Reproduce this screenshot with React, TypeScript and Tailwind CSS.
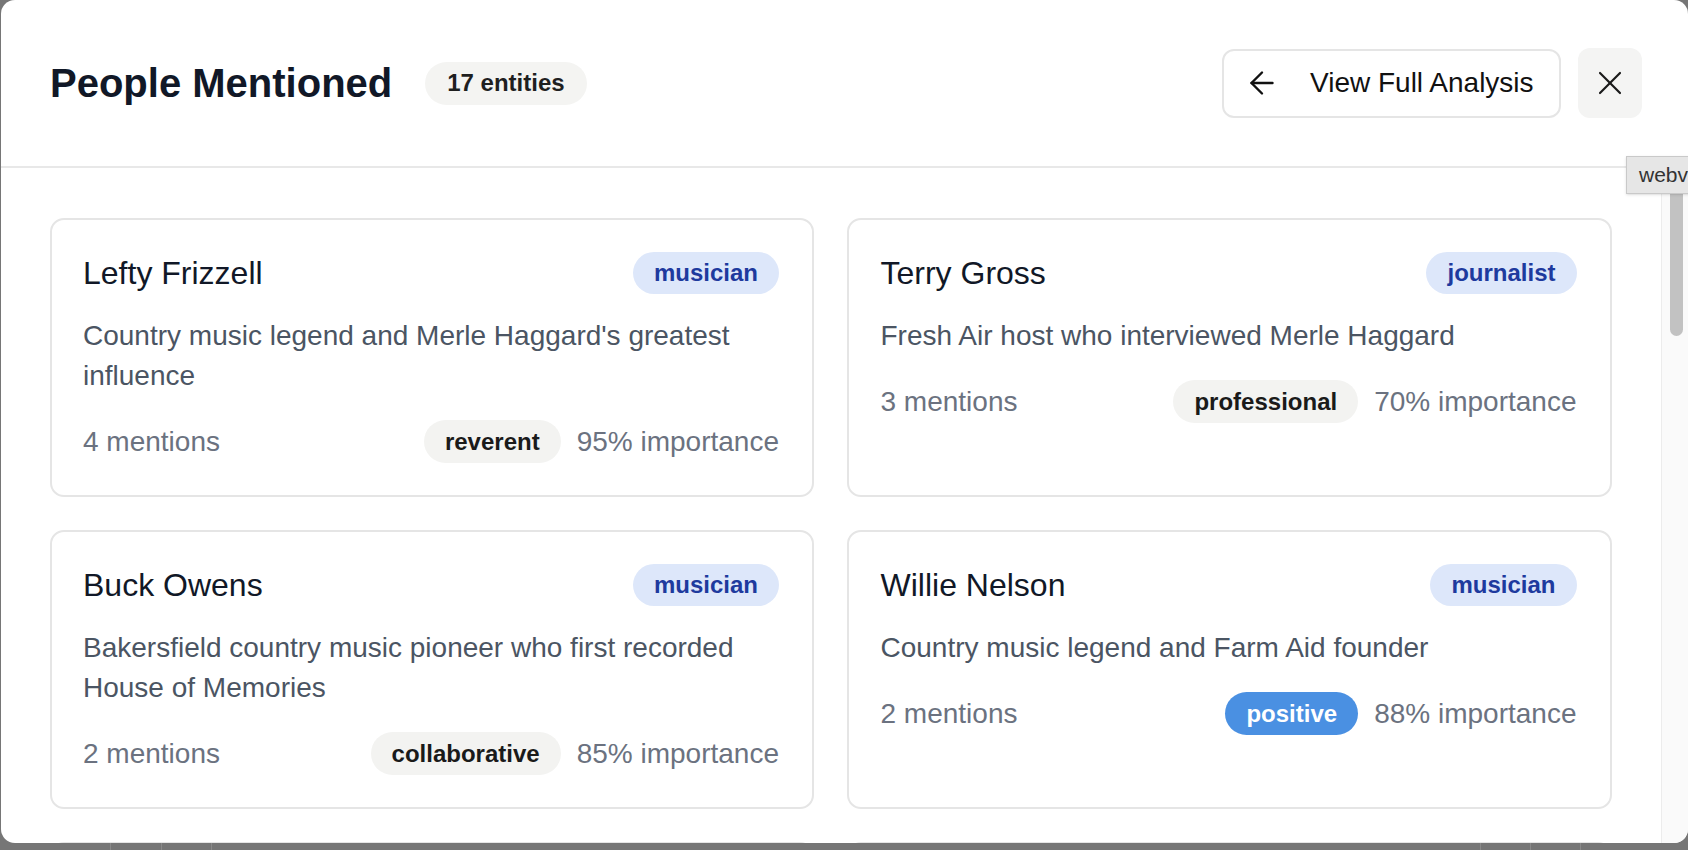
import { ArrowLeft, X } from "lucide-react";

type Person = {
  name: string;
  role: string;
  description: string;
  mentions: number;
  sentiment: string;
  importance: number;
};

const people: Person[] = [
  {
    name: "Lefty Frizzell",
    role: "musician",
    description: "Country music legend and Merle Haggard's greatest influence",
    mentions: 4,
    sentiment: "reverent",
    importance: 95,
  },
  {
    name: "Terry Gross",
    role: "journalist",
    description: "Fresh Air host who interviewed Merle Haggard",
    mentions: 3,
    sentiment: "professional",
    importance: 70,
  },
  {
    name: "Buck Owens",
    role: "musician",
    description: "Bakersfield country music pioneer who first recorded House of Memories",
    mentions: 2,
    sentiment: "collaborative",
    importance: 85,
  },
  {
    name: "Willie Nelson",
    role: "musician",
    description: "Country music legend and Farm Aid founder",
    mentions: 2,
    sentiment: "positive",
    importance: 88,
  },
  {
    name: "Johnny Cash",
    role: "musician",
    description: "Country icon whose San Quentin concert inspired Haggard",
    mentions: 2,
    sentiment: "reverent",
    importance: 80,
  },
  {
    name: "Bob Wills",
    role: "musician",
    description: "King of Western Swing",
    mentions: 1,
    sentiment: "reverent",
    importance: 60,
  },
];

function SentimentPill({ value }: { value: string }) {
  if (value === "positive") {
    return (
      <span className="flex h-[43px] items-center rounded-full bg-[#4a90e2] px-[21px] text-[24px] font-bold text-white">
        {value}
      </span>
    );
  }
  return (
    <span className="flex h-[43px] items-center rounded-full bg-[#f3f3f1] px-[21px] text-[24px] font-bold text-[#1a1a1a]">
      {value}
    </span>
  );
}

function PersonCard({ person }: { person: Person }) {
  return (
    <div className="rounded-[14px] border-2 border-[#e5e5e5] bg-white py-[32px] pl-[31.5px] pr-[33px]">
      <div className="flex h-[42px] items-center justify-between">
        <span className="text-[32px] leading-none text-[#111827]">{person.name}</span>
        <span className="flex h-[42px] items-center rounded-full bg-[#dde7fa] px-[21px] text-[24px] font-bold text-[#1e3a9e]">
          {person.role}
        </span>
      </div>
      <p className="mt-[22px] text-[28px] leading-[40px] text-[#4b5563]">{person.description}</p>
      <div className="mt-[24px] flex h-[43px] items-center justify-between text-[28px] text-[#6b7280]">
        <span>{person.mentions} mentions</span>
        <div className="flex items-center gap-[16px]">
          <SentimentPill value={person.sentiment} />
          <span>{person.importance}% importance</span>
        </div>
      </div>
    </div>
  );
}

export default function App() {
  return (
    <div
      className="flex h-screen w-full flex-col overflow-hidden bg-[#767676]"
      style={{ fontFamily: '"Liberation Sans", Arial, sans-serif' }}
    >
      <div className="relative ml-px flex h-[843px] flex-col overflow-hidden rounded-[14px] bg-white">
        {/* header */}
        <div className="flex h-[168px] shrink-0 items-center justify-between border-b-2 border-[#e8e8e8] pl-[49px] pr-[46px]">
          <div className="flex items-center gap-[33px]">
            <h1 className="text-[40px] font-bold leading-none text-[#111827]">People Mentioned</h1>
            <span className="flex h-[43px] items-center rounded-full bg-[#f4f4f2] px-[22px] text-[24px] font-bold text-[#1f1f1f]">
              17 entities
            </span>
          </div>
          <div className="flex items-center gap-[17px]">
            <button className="flex h-[69px] w-[339px] items-center gap-[30px] rounded-[12px] border-2 border-[#e5e5e5] bg-white pl-[20px] text-[28px] text-[#111111]">
              <ArrowLeft size={36} strokeWidth={1.6} />
              View Full Analysis
            </button>
            <button className="flex h-[70px] w-[64px] items-center justify-center rounded-[12px] bg-[#f4f4f3] text-[#1a1a1a]">
              <X size={40} strokeWidth={1.3} />
            </button>
          </div>
        </div>

        {/* body */}
        <div className="flex min-h-0 flex-1">
          <div className="min-w-0 flex-1 overflow-hidden">
            <div className="grid grid-cols-2 gap-x-[33px] gap-y-[33px] pl-[48.5px] pr-[49.5px] pt-[50px]">
              {people.map((p) => (
                <PersonCard key={p.name} person={p} />
              ))}
            </div>
          </div>
          <div className="w-[27px] shrink-0 border-l border-[#ececec] bg-[#fafafa] pl-[8px]">
            <div className="mt-[3px] h-[165px] w-[13px] rounded-full bg-[#c2c2c2]" />
          </div>
        </div>

        {/* tooltip */}
        <div className="absolute left-[1625px] top-[156px] flex h-[38px] w-[120px] items-center border border-[#c9c9c9] bg-[#e6e6e6] pl-[12px] text-[21px] text-[#333333] shadow-sm">
          webview
        </div>
      </div>

      {/* backdrop strip */}
      <div className="flex h-[7px] shrink-0">
        <div className="w-[111px] border-r border-[#8a8a8a]" />
        <div className="w-[51px] border-r border-[#8a8a8a]" />
        <div className="w-[50px] border-r border-[#8a8a8a]" />
        <div className="flex-1 border-r border-[#8a8a8a]" />
        <div className="w-[50px] border-r border-[#8a8a8a]" />
        <div className="w-[50px] border-r border-[#8a8a8a]" />
        <div className="w-[107px]" />
      </div>
    </div>
  );
}
